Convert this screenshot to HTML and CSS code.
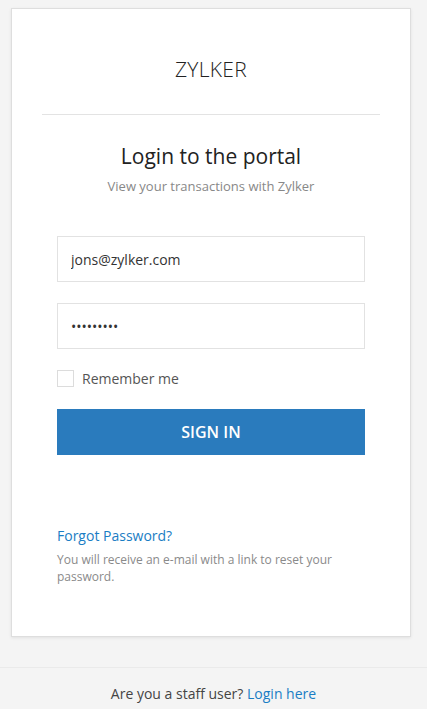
FILE: index.html
```html
<!DOCTYPE html>
<html lang="en">
<head>
    <meta charset="UTF-8">
    <meta name="viewport" content="width=device-width, initial-scale=1.0">
    <title>Zylker Portal Login</title>
    <link rel="stylesheet" href="styles.css">
</head>
<body>

    <div class="page">
        <div class="card">
            <div class="logo">ZYLKER</div>
            <hr class="divider">

            <h2 class="title">Login to the portal</h2>
            <p class="subtitle">View your transactions with Zylker</p>

            <form class="login-form">
                <input type="email" class="field" value="jons@zylker.com">
                <input type="password" class="field" value="123456789">

                <label class="remember">
                    <input type="checkbox" class="check">
                    <span>Remember me</span>
                </label>

                <button type="submit" class="signin">SIGN IN</button>
            </form>

            <a href="#" class="forgot">Forgot Password?</a>
            <p class="help">You will receive an e-mail with a link to reset your password.</p>
        </div>
    </div>

    <div class="footer">
        Are you a staff user? <a href="#">Login here</a>
    </div>

</body>
</html>
```

FILE: styles.css
```css
body {
    font-family: "Open Sans", Arial, sans-serif;
    margin: 0;
    padding: 0;
    background-color: #f4f4f4;
    color: #333;
}

.page {
    padding: 8px 0 0 11px;
}

.card {
    width: 400px;
    box-sizing: border-box;
    background-color: #ffffff;
    border: 1px solid #dedede;
    box-shadow: 0 1px 3px rgba(0,0,0,0.08);
    padding: 45px 0 51px;
}

.logo {
    text-align: center;
    font-size: 21px;
    font-weight: 300;
    line-height: 30px;
    letter-spacing: 0.3px;
    color: #222;
}

.divider {
    border: none;
    border-top: 1px solid #e3e3e3;
    margin: 30px 30px 0;
}

.title {
    text-align: center;
    font-size: 21px;
    font-weight: 400;
    line-height: 28px;
    margin: 27px 0 0;
    color: #222;
}

.subtitle {
    text-align: center;
    font-size: 13px;
    line-height: 18px;
    margin: 7px 0 0;
    color: #888;
}

.login-form {
    padding: 0 45px;
    margin-top: 41px;
}

.field {
    display: block;
    width: 100%;
    height: 46px;
    box-sizing: border-box;
    border: 1px solid #e2e2e2;
    border-radius: 0;
    padding: 0 13px;
    font-family: "Open Sans", Arial, sans-serif;
    font-size: 14px;
    color: #333;
    margin-bottom: 21px;
    outline: none;
}

.remember {
    display: flex;
    align-items: center;
    gap: 8px;
    font-size: 14px;
    color: #555;
    height: 17px;
}

.check {
    appearance: none;
    width: 17px;
    height: 17px;
    margin: 0;
    border: 1px solid #dcdcdc;
    background: #fff;
}

.signin {
    display: block;
    width: 100%;
    height: 46px;
    margin-top: 22px;
    border: none;
    background-color: #2a7bbd;
    color: #fff;
    font-family: "Open Sans", Arial, sans-serif;
    font-size: 16px;
    font-weight: 600;
    cursor: pointer;
}

.forgot {
    display: block;
    margin: 71px 45px 0;
    font-size: 14px;
    line-height: 20px;
    color: #1a7dc4;
    text-decoration: none;
}

.help {
    margin: 5px 45px 0;
    font-size: 12px;
    line-height: 17px;
    color: #8a8a8a;
}

.footer {
    margin-top: 30px;
    border-top: 1px solid #eaeaea;
    text-align: center;
    font-size: 14px;
    line-height: 20px;
    padding: 16px 0 10px;
    color: #444;
}

.footer a {
    color: #1a7dc4;
    text-decoration: none;
}
```
